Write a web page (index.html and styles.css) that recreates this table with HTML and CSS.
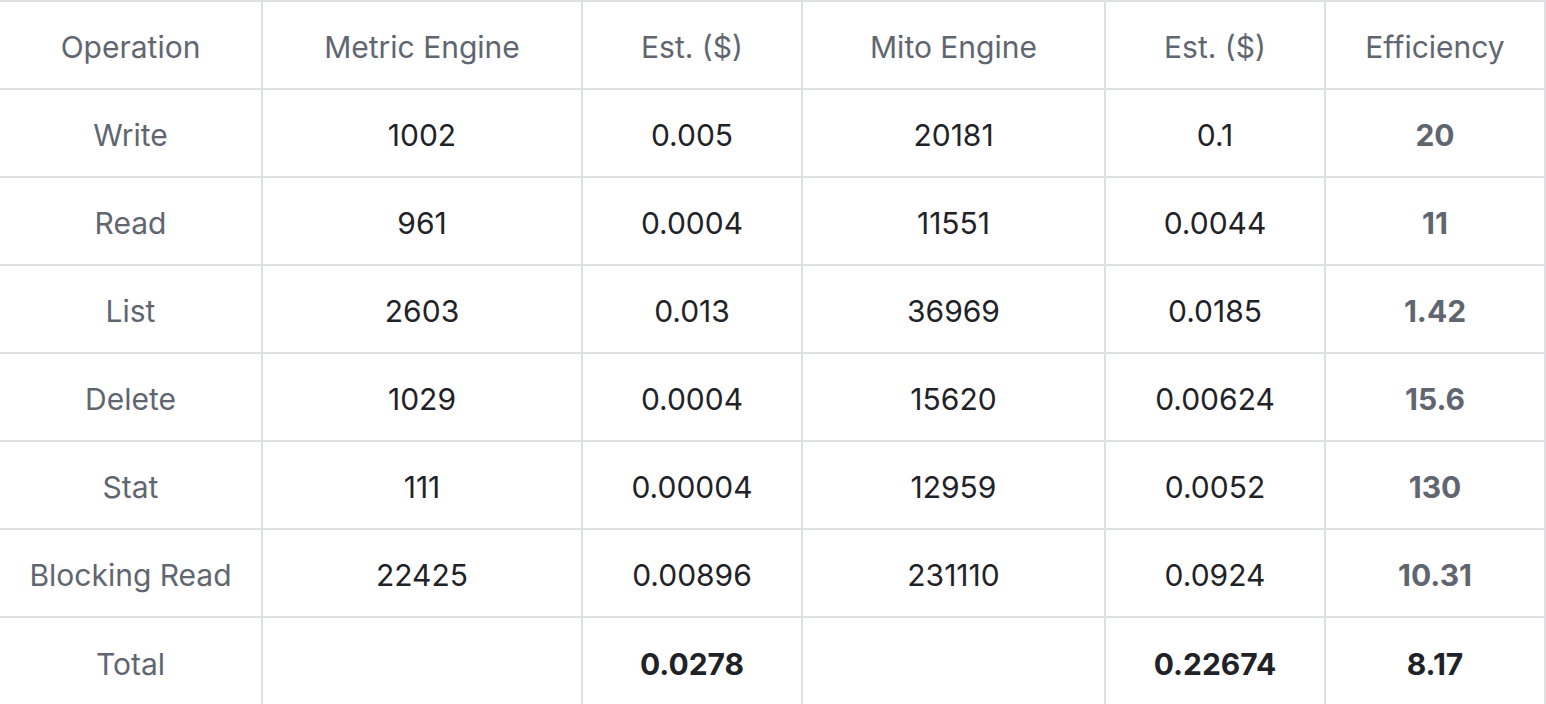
FILE: index.html
```html
<!DOCTYPE html>
<html lang="en">
<head>
<meta charset="utf-8">
<title>Engine cost comparison</title>
<link rel="stylesheet" href="styles.css">
</head>
<body>
<table class="cost-table">
  <colgroup>
    <col class="c-op">
    <col class="c-metric">
    <col class="c-est">
    <col class="c-mito">
    <col class="c-est2">
    <col class="c-eff">
  </colgroup>
  <thead>
    <tr>
      <th>Operation</th>
      <th>Metric Engine</th>
      <th>Est. ($)</th>
      <th>Mito Engine</th>
      <th>Est. ($)</th>
      <th>Efficiency</th>
    </tr>
  </thead>
  <tbody>
    <tr><td class="op">Write</td><td>1002</td><td>0.005</td><td>20181</td><td>0.1</td><td class="eff">20</td></tr>
    <tr><td class="op">Read</td><td>961</td><td>0.0004</td><td>11551</td><td>0.0044</td><td class="eff">11</td></tr>
    <tr><td class="op">List</td><td>2603</td><td>0.013</td><td>36969</td><td>0.0185</td><td class="eff">1.42</td></tr>
    <tr><td class="op">Delete</td><td>1029</td><td>0.0004</td><td>15620</td><td>0.00624</td><td class="eff">15.6</td></tr>
    <tr><td class="op">Stat</td><td>111</td><td>0.00004</td><td>12959</td><td>0.0052</td><td class="eff">130</td></tr>
    <tr><td class="op">Blocking Read</td><td>22425</td><td>0.00896</td><td>231110</td><td>0.0924</td><td class="eff">10.31</td></tr>
    <tr class="total"><td class="op">Total</td><td></td><td class="strong">0.0278</td><td></td><td class="strong">0.22674</td><td class="strong">8.17</td></tr>
  </tbody>
</table>
</body>
</html>
```
FILE: styles.css
```css
html, body {
  margin: 0;
  padding: 0;
  background: #ffffff;
}
body {
  overflow: hidden;
}
.cost-table {
  margin-left: -2px;
  border-collapse: separate;
  border-spacing: 0;
  table-layout: fixed;
  width: 1548px;
  border-top: 2px solid #dfe0e4;
  border-left: 2px solid #dfe0e4;
  font-family: Inter, "Noto Sans", "Liberation Sans", sans-serif;
  font-size: 30px;
  line-height: 36px;
  color: #1f2328;
}
.c-op { width: 263px; }
.c-metric { width: 320px; }
.c-est { width: 220px; }
.c-mito { width: 303px; }
.c-est2 { width: 220px; }
.c-eff { width: 220px; }
.cost-table th,
.cost-table td {
  box-sizing: border-box;
  height: 88px;
  padding: 4px 8px 0;
  text-align: center;
  vertical-align: middle;
  border-right: 2px solid #dfe0e4;
  border-bottom: 2px solid #dfe0e4;
  white-space: nowrap;
}
.cost-table th {
  font-weight: 400;
  color: #5f6670;
}
.cost-table td.op {
  color: #5f6670;
}
.cost-table td.eff {
  font-weight: 700;
  color: #5f6670;
}
.cost-table td.strong {
  font-weight: 700;
  color: #1f2328;
}
.cost-table tr.total td {
  border-bottom: none;
}
```
